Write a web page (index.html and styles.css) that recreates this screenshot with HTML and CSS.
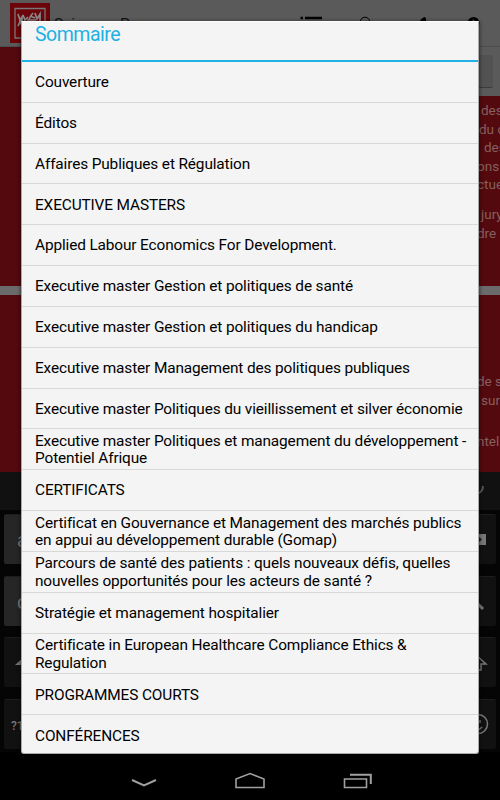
FILE: index.html
```
<!DOCTYPE html>
<html lang="fr">
<head>
  <meta charset="UTF-8">
  <meta name="viewport" content="width=device-width, initial-scale=1.0">
  <title>Sommaire</title>
  <link rel="stylesheet" href="styles.css">
</head>
<body>
  <div class="screen">
    <header class="app-bar">
      <div class="logo">
        <svg width="40" height="40" viewBox="0 0 40 40" fill="none">
          <path d="M5 5.500H35V35H5Z" stroke="#777" stroke-width="1.3"/>
          <path d="M8 11l2 6 2-3v5M13 12l2 5 3-3M19 17c1-4 2-5 4-7M25 10l2 6 3-5v7M9 18h3M17 17h9M8 23l2-4 2 3M20 13l5 2" stroke="#888" stroke-width="1.700"/>
        </svg>
      </div>
      <span class="app-title">Sciences Po</span>
      <svg class="actions" width="190" height="46" viewBox="0 0 190 46" fill="none">
        <path d="M-5.500 18H-3M-1 18H16M-5.500 24H-3M-1 24H16M-5.500 30H-3M-1 30H16" stroke="#000" stroke-width="2.500"/>
        <circle cx="59" cy="22" r="4.800" stroke="#000" stroke-width="1"/>
        <path d="M113 22l3-3.500q3-3 4 0v5z" fill="#000"/>
        <circle cx="167.500" cy="23" r="6" fill="#000"/>
        <circle cx="167.500" cy="20.500" r="1" fill="#5a5a5a"/>
      </svg>
    </header>

    <main class="content">
      <div class="search-strip"><div class="search-box"></div></div>
      <section class="block block-top">
        <p class="line in-3">des</p>
        <p class="line in-2">du c</p>
        <p class="line in-6">des</p>
        <p class="line">ons</p>
        <p class="line">ctue</p>
        <p class="line in-3 para">jury</p>
        <p class="line">dre</p>
      </section>
      <section class="block block-bottom">
        <p class="line">de s</p>
        <p class="line in-3">sur</p>
        <p class="line last">ntel</p>
      </section>
    </main>

    <div class="keyboard">
      <div class="suggestions">
        <svg width="20" height="24" viewBox="0 0 20 24" fill="none" stroke="#555" stroke-width="2">
          <path d="M10 2v10M4 8c0 10 13 10 13 0M10 16v4"/>
        </svg>
      </div>
      <div class="key-row">
        <div class="key light"><span class="letter">a</span></div>
        <div class="key right">
          <svg width="40" height="50" viewBox="0 0 40 50"><path d="M12 19H30V30H12Z" fill="#777"/><path d="M23 22l3 2.500-3 2.500" fill="#181818"/></svg>
        </div>
      </div>
      <div class="key-row">
        <div class="key light"><span class="letter">q</span></div>
        <div class="key right">
          <svg width="40" height="50" viewBox="0 0 40 50" fill="none"><path d="M17 22l10 10" stroke="#777" stroke-width="3"/></svg>
        </div>
      </div>
      <div class="key-row">
        <div class="key">
          <svg width="40" height="50" viewBox="0 0 40 50"><path d="M11 27l9-8v8z" fill="#777"/></svg>
        </div>
        <div class="key right">
          <svg width="40" height="50" viewBox="0 0 40 50" fill="none"><path d="M20 17L30 26H25V32H20" stroke="#777" stroke-width="1.500"/></svg>
        </div>
      </div>
      <div class="key-row">
        <div class="key"><span class="symbols">?123</span></div>
        <div class="key right">
          <svg width="40" height="50" viewBox="0 0 40 50" fill="none" stroke="#777" stroke-width="1.500">
            <circle cx="22" cy="24" r="9.500"/>
            <path d="M17 27q5 5 9 0M24 20v3"/>
          </svg>
        </div>
      </div>
    </div>

    <nav class="nav-bar">
      <svg width="500" height="48" viewBox="0 0 500 48" fill="none" stroke="#a0a0a0" stroke-width="2">
        <path d="M132 28L144 33.500L156 28"/>
        <path d="M236 35.500V27L250 21.500L264 27V35.500Z" stroke-width="1.600"/>
        <path d="M344.500 27H366.500V35.500H344.500Z" stroke-width="1.600"/>
        <path d="M350 22.800H370.800V32"/>
      </svg>
    </nav>
  </div>

  <div class="dialog">
    <h1 class="dialog-title">Sommaire</h1>
    <ul class="toc">
      <li>Couverture</li>
      <li>Éditos</li>
      <li>Affaires Publiques et Régulation</li>
      <li>EXECUTIVE MASTERS</li>
      <li>Applied Labour Economics For Development.</li>
      <li>Executive master Gestion et politiques de santé</li>
      <li>Executive master Gestion et politiques du handicap</li>
      <li>Executive master Management des politiques publiques</li>
      <li>Executive master Politiques du vieillissement et silver économie</li>
      <li>Executive master Politiques et management du développement -<br>Potentiel Afrique</li>
      <li>CERTIFICATS</li>
      <li>Certificat en Gouvernance et Management des marchés publics<br>en appui au développement durable (Gomap)</li>
      <li>Parcours de santé des patients : quels nouveaux défis, quelles<br>nouvelles opportunités pour les acteurs de santé ?</li>
      <li>Stratégie et management hospitalier</li>
      <li>Certificate in European Healthcare Compliance Ethics &amp;<br>Regulation</li>
      <li>PROGRAMMES COURTS</li>
      <li>CONFÉRENCES</li>
    </ul>
  </div>
</body>
</html>
```

FILE: styles.css
```
* {
  box-sizing: border-box;
}

body {
  margin: 0;
  width: 500px;
  height: 800px;
  overflow: hidden;
  position: relative;
  background: #000;
  font-family: Roboto, "Liberation Sans", sans-serif;
}

svg {
  display: block;
}

.screen {
  display: flex;
  flex-direction: column;
  height: 800px;
}

.app-bar {
  display: flex;
  height: 47px;
  padding: 3px 0 0 10px;
  background: #5a5a5a;
  border-bottom: 1px solid #4d4d4d;
}

.logo {
  width: 40px;
  height: 40px;
  background: #6b0509;
}

.app-title {
  width: 246px;
  padding-left: 4px;
  font-size: 15.5px;
  line-height: 43px;
  color: #111;
}

.actions {
  margin: -3px 0 0 10px;
  overflow: visible;
}

/* page behind the dialog */
.content {
  height: 425px;
  background: #54090e;
}

.search-strip {
  display: flex;
  justify-content: flex-end;
  width: 250px;
  height: 49px;
  margin-left: 250px;
  padding: 8px 7px 0 0;
  background: #5a5a5a;
}

.search-box {
  width: 200px;
  height: 33px;
  background: #525252;
  border-bottom: 1px solid #3c3c3c;
  border-radius: 2px;
}

.block {
  overflow: hidden;
  padding-left: 477px;
  white-space: nowrap;
}

.block-top {
  height: 190px;
  padding-top: 5px;
}

.block-bottom {
  height: 186px;
  padding-top: 77px;
  border-top: 9px solid #6b6b6b;
}

.line {
  margin: 0;
  font-size: 13.5px;
  line-height: 18.6px;
  color: #84605f;
}

.line.in-2 {
  padding-left: 2px;
}

.line.in-3 {
  padding-left: 4px;
}

.line.in-6 {
  padding-left: 7px;
}

.line.para {
  margin-top: 11px;
}

.line.last {
  margin-top: 23px;
}

.keyboard {
  height: 280px;
  background: #050505;
}

.suggestions {
  display: flex;
  justify-content: flex-end;
  height: 38px;
  padding: 6px 14px 0 0;
  background: #111;
}

.key-row {
  display: flex;
  justify-content: space-between;
  height: 61.5px;
  padding: 4px 4px 7px;
}

.key {
  width: 40px;
  height: 50px;
  overflow: hidden;
  background: #111;
  border-top: 1px solid #1d1d1d;
  border-radius: 2px;
  color: #777;
  line-height: 50px;
}

.key.light {
  background: #262626;
}

.letter {
  padding-left: 13px;
  font-size: 20px;
}

.symbols {
  padding-left: 7px;
  font-size: 12px;
  font-weight: 500;
}

.nav-bar {
  height: 48px;
  background: #000;
}

.dialog {
  position: absolute;
  top: 21px;
  left: 21px;
  width: 458px;
  height: 733px;
  overflow: hidden;
  background: #f4f4f4;
  border: 1px solid #aaa;
  border-top-color: #fff;
  border-radius: 0 0 3px 3px;
  box-shadow: 0 1px 4px rgba(0, 0, 0, 0.7);
}

.dialog-title {
  height: 40px;
  margin: 0;
  padding-left: 13px;
  border-bottom: 2px solid #1fb0e4;
  font-size: 19.5px;
  font-weight: 400;
  letter-spacing: -0.5px;
  line-height: 25px;
  color: #1fb0e4;
}

.toc {
  margin: 0;
  padding: 0;
  list-style: none;
}

.toc li {
  display: flex;
  align-items: center;
  height: 40.83px;
  padding: 2px 0 0 13px;
  border-bottom: 1px solid #d8d8d8;
  font-size: 15.4px;
  letter-spacing: -0.13px;
  line-height: 17.5px;
  white-space: nowrap;
  color: #000;
}

.toc li:last-child {
  border-bottom: none;
}
```
